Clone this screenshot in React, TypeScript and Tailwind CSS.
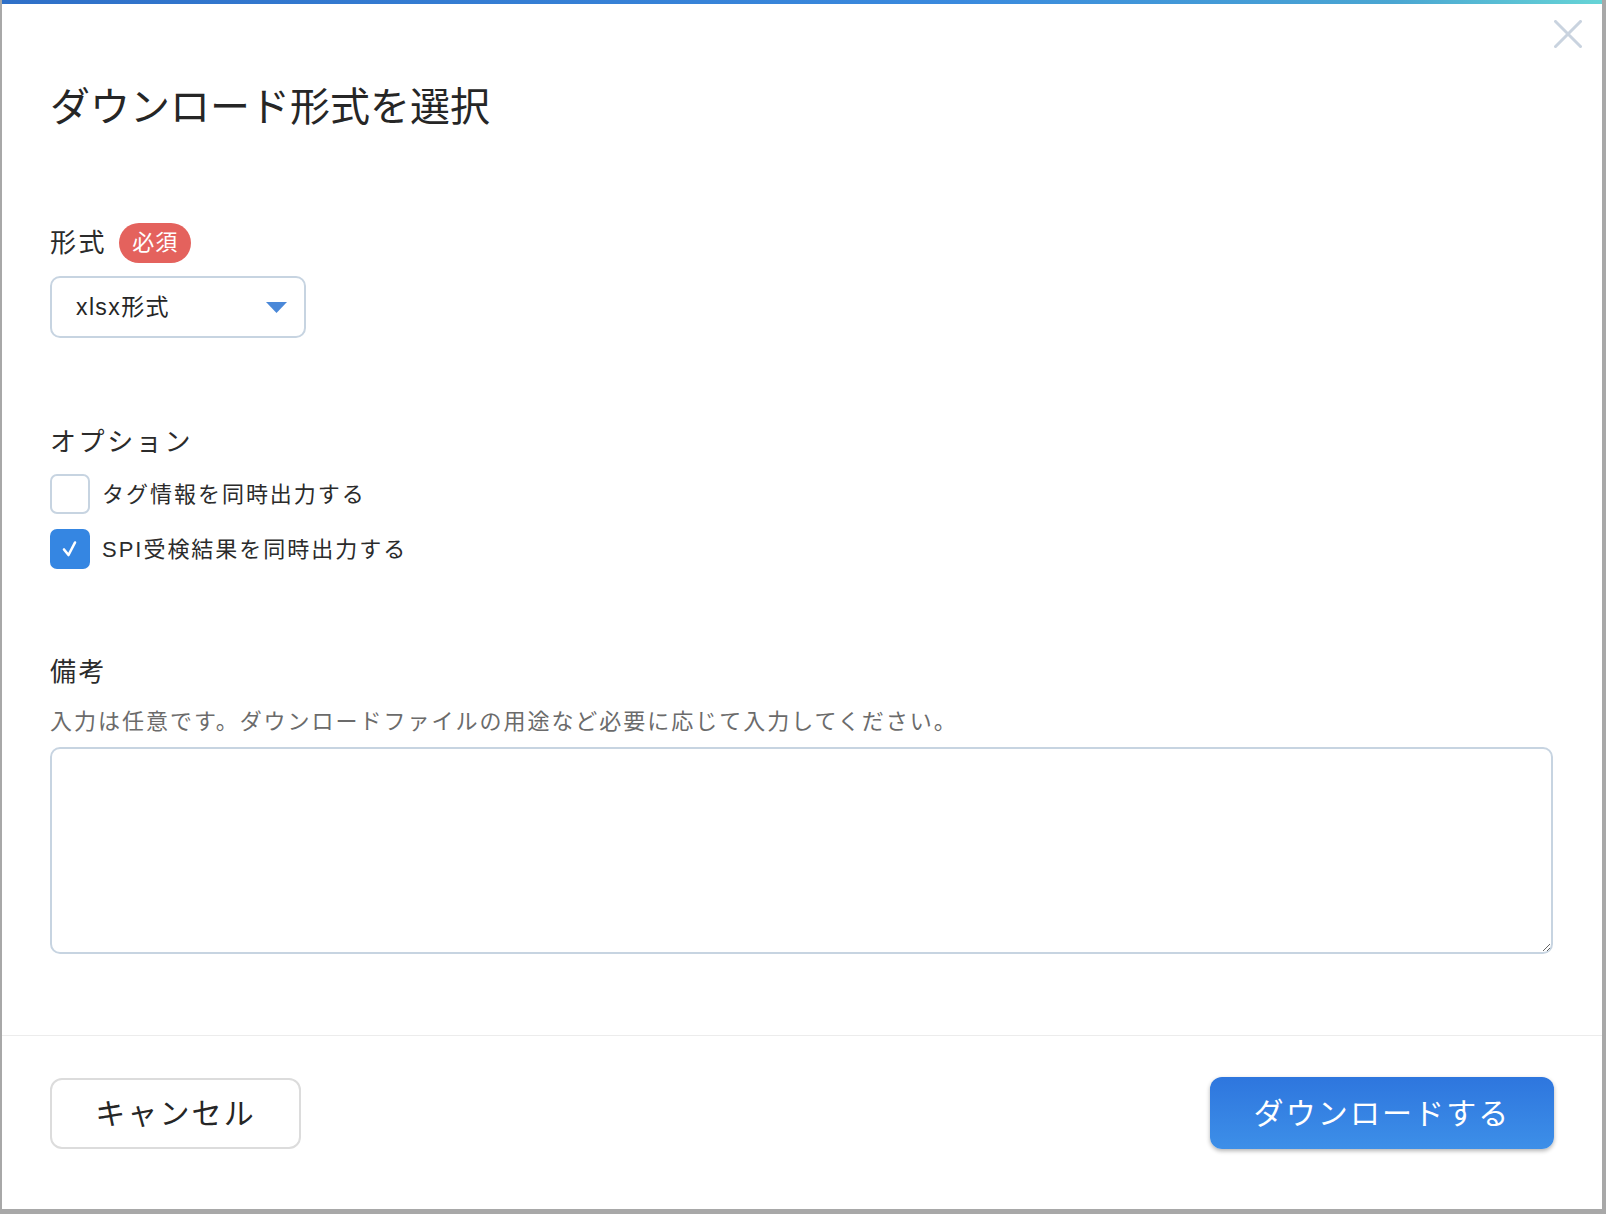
import React from "react";

export default function App() {
  return (
    <div className="w-[1606px] h-[1214px] bg-[#a8a8a8] flex font-['Liberation_Sans','Noto_Sans_CJK_JP',sans-serif] overflow-hidden">
      <div className="ml-[2px] w-[1600px] h-[1209px] bg-white relative flex flex-col">
        <div className="h-[4px] w-full bg-[linear-gradient(90deg,#2f70c8_0%,#3a8ade_60%,#4aa6d2_87%,#66d4d6_100%)]" />
        <button className="absolute right-[20px] top-[20px] w-[28px] h-[28px]" aria-label="close">
          <svg width="28" height="28" viewBox="0 0 28 28">
            <path d="M1.5 1.5 L26.5 26.5 M26.5 1.5 L1.5 26.5" stroke="#c9d3df" strokeWidth="3" strokeLinecap="square" />
          </svg>
        </button>

        <div className="pl-[48px] pr-[49px] flex flex-col">
          <h1 className="mt-[73px] text-[40px] leading-[60px] text-[#262626] font-normal">
            ダウンロード形式を選択
          </h1>

          <div className="mt-[86px] flex items-center h-[40px]">
            <span className="text-[26px] leading-[40px] tracking-[0.1em] text-[#2b2b2b]">形式</span>
            <span className="ml-[12px] h-[40px] w-[72px] rounded-full bg-[#e4625d] text-white text-[22px] leading-[40px] flex items-center justify-center tracking-[0.04em]">
              必須
            </span>
          </div>

          <div className="mt-[13px] w-[256px] h-[62px] border-2 border-[#c7d4e1] rounded-[10px] flex items-center justify-between pl-[24px] pr-[17px]">
            <span className="text-[23px] tracking-[0.06em] text-[#262626]">xlsx形式</span>
            <svg width="21" height="11" viewBox="0 0 21 11">
              <path d="M0 0 L21 0 L10.5 11 Z" fill="#4a88d8" />
            </svg>
          </div>

          <div className="mt-[84px] text-[26px] leading-[40px] tracking-[0.1em] text-[#2b2b2b]">オプション</div>

          <div className="mt-[12px] flex flex-col gap-[15px]">
            <label className="flex items-center h-[40px]">
              <span className="w-[40px] h-[40px] rounded-[7px] border-2 border-[#c7d4e1] bg-white" />
              <span className="ml-[12px] text-[22px] tracking-[0.09em] text-[#2b2b2b]">タグ情報を同時出力する</span>
            </label>
            <label className="flex items-center h-[40px]">
              <span className="w-[40px] h-[40px] rounded-[7px] bg-[#3586e2] flex items-center justify-center">
                <svg width="18" height="18" viewBox="0 0 18 18">
                  <path d="M3 9.5 L7.5 15 L14 2.5" stroke="white" strokeWidth="2.6" fill="none" strokeLinecap="round" strokeLinejoin="round" />
                </svg>
              </span>
              <span className="ml-[12px] text-[22px] tracking-[0.09em] text-[#2b2b2b]">SPI受検結果を同時出力する</span>
            </label>
          </div>

          <div className="mt-[83px] text-[26px] leading-[40px] tracking-[0.1em] text-[#2b2b2b]">備考</div>
          <div className="mt-[14px] text-[22px] leading-[32px] tracking-[0.09em] text-[#6b6b6b]">
            入力は任意です。ダウンロードファイルの用途など必要に応じて入力してください。
          </div>
          <textarea className="mt-[9px] w-[1503px] h-[207px] border-2 border-[#c7d4e1] rounded-[10px] outline-none p-3 text-[22px]" />
        </div>

        <div className="mt-[81px] h-[1px] w-full bg-[#ececec]" />

        <div className="pl-[48px] pr-[48px] mt-[41px] flex items-center justify-between">
          <button className="w-[251px] h-[71px] border-2 border-[#dcdcdc] rounded-[12px] bg-white text-[30px] tracking-[0.07em] text-[#262626] flex items-center justify-center">
            キャンセル
          </button>
          <button className="w-[344px] h-[72px] rounded-[12px] bg-[linear-gradient(180deg,#2e76de_0%,#3d8fe8_100%)] shadow-[0_2px_4px_rgba(0,0,0,0.3)] text-[30px] tracking-[0.07em] text-white flex items-center justify-center">
            ダウンロードする
          </button>
        </div>
      </div>
    </div>
  );
}
